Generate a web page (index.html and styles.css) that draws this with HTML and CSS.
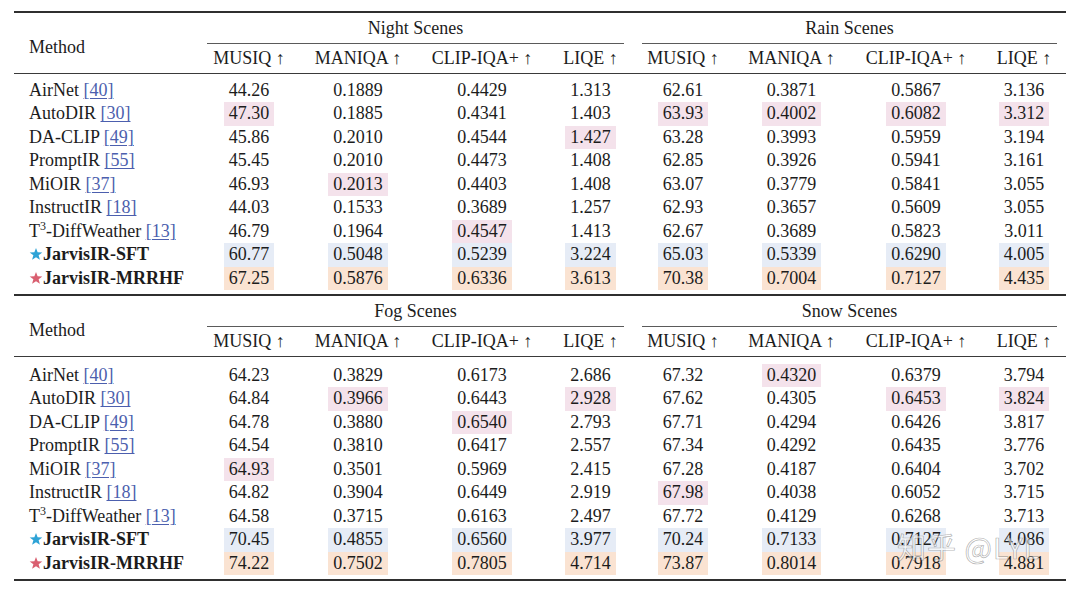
FILE: index.html
```html
<!DOCTYPE html>
<html lang="en">
<head>
<meta charset="utf-8">
<title>Results</title>
<link rel="stylesheet" href="styles.css">
</head>
<body>
<div class="page">
  <table class="tbl t1">
    <colgroup>
      <col class="c-m"><col class="c-a"><col class="c-b"><col class="c-c"><col class="c-d">
      <col class="c-e"><col class="c-f"><col class="c-g"><col class="c-h">
    </colgroup>
    <thead>
      <tr class="grp-row">
        <th class="method" rowspan="2">Method</th>
        <th colspan="4" class="grp"><div class="grp-in">Night Scenes</div></th>
        <th colspan="4" class="grp"><div class="grp-in">Rain Scenes</div></th>
      </tr>
      <tr class="hdr-row">
        <th>MUSIQ ↑</th><th>MANIQA ↑</th><th>CLIP-IQA+ ↑</th><th>LIQE ↑</th>
        <th>MUSIQ ↑</th><th>MANIQA ↑</th><th>CLIP-IQA+ ↑</th><th>LIQE ↑</th>
      </tr>
    </thead>
    <tbody>
      <tr class="first">
        <td class="name">AirNet <span class="cite">[40]</span></td>
        <td>44.26</td><td>0.1889</td><td>0.4429</td><td>1.313</td>
        <td>62.61</td><td>0.3871</td><td>0.5867</td><td>3.136</td>
      </tr>
      <tr>
        <td class="name">AutoDIR <span class="cite">[30]</span></td>
        <td><span class="hl pk">47.30</span></td><td>0.1885</td><td>0.4341</td><td>1.403</td>
        <td><span class="hl pk">63.93</span></td><td><span class="hl pk">0.4002</span></td><td><span class="hl pk">0.6082</span></td><td><span class="hl pk">3.312</span></td>
      </tr>
      <tr>
        <td class="name">DA-CLIP <span class="cite">[49]</span></td>
        <td>45.86</td><td>0.2010</td><td>0.4544</td><td><span class="hl pk">1.427</span></td>
        <td>63.28</td><td>0.3993</td><td>0.5959</td><td>3.194</td>
      </tr>
      <tr>
        <td class="name">PromptIR <span class="cite">[55]</span></td>
        <td>45.45</td><td>0.2010</td><td>0.4473</td><td>1.408</td>
        <td>62.85</td><td>0.3926</td><td>0.5941</td><td>3.161</td>
      </tr>
      <tr>
        <td class="name">MiOIR <span class="cite">[37]</span></td>
        <td>46.93</td><td><span class="hl pk">0.2013</span></td><td>0.4403</td><td>1.408</td>
        <td>63.07</td><td>0.3779</td><td>0.5841</td><td>3.055</td>
      </tr>
      <tr>
        <td class="name">InstructIR <span class="cite">[18]</span></td>
        <td>44.03</td><td>0.1533</td><td>0.3689</td><td>1.257</td>
        <td>62.93</td><td>0.3657</td><td>0.5609</td><td>3.055</td>
      </tr>
      <tr>
        <td class="name">T<sup>3</sup>-DiffWeather <span class="cite">[13]</span></td>
        <td>46.79</td><td>0.1964</td><td><span class="hl pk">0.4547</span></td><td>1.413</td>
        <td>62.67</td><td>0.3689</td><td>0.5823</td><td>3.011</td>
      </tr>
      <tr>
        <td class="name ours"><svg class="star s-blue" viewBox="0 0 24 24"><polygon points="12,1.5 14.8,9 22.8,9.3 16.5,14.2 18.7,22 12,17.5 5.3,22 7.5,14.2 1.2,9.3 9.2,9"/></svg>JarvisIR-SFT</td>
        <td><span class="hl bl">60.77</span></td><td><span class="hl bl">0.5048</span></td><td><span class="hl bl">0.5239</span></td><td><span class="hl bl">3.224</span></td>
        <td><span class="hl bl">65.03</span></td><td><span class="hl bl">0.5339</span></td><td><span class="hl bl">0.6290</span></td><td><span class="hl bl">4.005</span></td>
      </tr>
      <tr class="last">
        <td class="name ours"><svg class="star s-red" viewBox="0 0 24 24"><polygon points="12,1.5 14.8,9 22.8,9.3 16.5,14.2 18.7,22 12,17.5 5.3,22 7.5,14.2 1.2,9.3 9.2,9"/></svg>JarvisIR-MRRHF</td>
        <td><span class="hl or">67.25</span></td><td><span class="hl or">0.5876</span></td><td><span class="hl or">0.6336</span></td><td><span class="hl or">3.613</span></td>
        <td><span class="hl or">70.38</span></td><td><span class="hl or">0.7004</span></td><td><span class="hl or">0.7127</span></td><td><span class="hl or">4.435</span></td>
      </tr>
    </tbody>
  </table>

  <table class="tbl t2">
    <colgroup>
      <col class="c-m"><col class="c-a"><col class="c-b"><col class="c-c"><col class="c-d">
      <col class="c-e"><col class="c-f"><col class="c-g"><col class="c-h">
    </colgroup>
    <thead>
      <tr class="grp-row">
        <th class="method" rowspan="2">Method</th>
        <th colspan="4" class="grp"><div class="grp-in">Fog Scenes</div></th>
        <th colspan="4" class="grp"><div class="grp-in">Snow Scenes</div></th>
      </tr>
      <tr class="hdr-row">
        <th>MUSIQ ↑</th><th>MANIQA ↑</th><th>CLIP-IQA+ ↑</th><th>LIQE ↑</th>
        <th>MUSIQ ↑</th><th>MANIQA ↑</th><th>CLIP-IQA+ ↑</th><th>LIQE ↑</th>
      </tr>
    </thead>
    <tbody>
      <tr class="first">
        <td class="name">AirNet <span class="cite">[40]</span></td>
        <td>64.23</td><td>0.3829</td><td>0.6173</td><td>2.686</td>
        <td>67.32</td><td><span class="hl pk">0.4320</span></td><td>0.6379</td><td>3.794</td>
      </tr>
      <tr>
        <td class="name">AutoDIR <span class="cite">[30]</span></td>
        <td>64.84</td><td><span class="hl pk">0.3966</span></td><td>0.6443</td><td><span class="hl pk">2.928</span></td>
        <td>67.62</td><td>0.4305</td><td><span class="hl pk">0.6453</span></td><td><span class="hl pk">3.824</span></td>
      </tr>
      <tr>
        <td class="name">DA-CLIP <span class="cite">[49]</span></td>
        <td>64.78</td><td>0.3880</td><td><span class="hl pk">0.6540</span></td><td>2.793</td>
        <td>67.71</td><td>0.4294</td><td>0.6426</td><td>3.817</td>
      </tr>
      <tr>
        <td class="name">PromptIR <span class="cite">[55]</span></td>
        <td>64.54</td><td>0.3810</td><td>0.6417</td><td>2.557</td>
        <td>67.34</td><td>0.4292</td><td>0.6435</td><td>3.776</td>
      </tr>
      <tr>
        <td class="name">MiOIR <span class="cite">[37]</span></td>
        <td><span class="hl pk">64.93</span></td><td>0.3501</td><td>0.5969</td><td>2.415</td>
        <td>67.28</td><td>0.4187</td><td>0.6404</td><td>3.702</td>
      </tr>
      <tr>
        <td class="name">InstructIR <span class="cite">[18]</span></td>
        <td>64.82</td><td>0.3904</td><td>0.6449</td><td>2.919</td>
        <td><span class="hl pk">67.98</span></td><td>0.4038</td><td>0.6052</td><td>3.715</td>
      </tr>
      <tr>
        <td class="name">T<sup>3</sup>-DiffWeather <span class="cite">[13]</span></td>
        <td>64.58</td><td>0.3715</td><td>0.6163</td><td>2.497</td>
        <td>67.72</td><td>0.4129</td><td>0.6268</td><td>3.713</td>
      </tr>
      <tr>
        <td class="name ours"><svg class="star s-blue" viewBox="0 0 24 24"><polygon points="12,1.5 14.8,9 22.8,9.3 16.5,14.2 18.7,22 12,17.5 5.3,22 7.5,14.2 1.2,9.3 9.2,9"/></svg>JarvisIR-SFT</td>
        <td><span class="hl bl">70.45</span></td><td><span class="hl bl">0.4855</span></td><td><span class="hl bl">0.6560</span></td><td><span class="hl bl">3.977</span></td>
        <td><span class="hl bl">70.24</span></td><td><span class="hl bl">0.7133</span></td><td><span class="hl bl">0.7127</span></td><td><span class="hl bl">4.086</span></td>
      </tr>
      <tr class="last">
        <td class="name ours"><svg class="star s-red" viewBox="0 0 24 24"><polygon points="12,1.5 14.8,9 22.8,9.3 16.5,14.2 18.7,22 12,17.5 5.3,22 7.5,14.2 1.2,9.3 9.2,9"/></svg>JarvisIR-MRRHF</td>
        <td><span class="hl or">74.22</span></td><td><span class="hl or">0.7502</span></td><td><span class="hl or">0.7805</span></td><td><span class="hl or">4.714</span></td>
        <td><span class="hl or">73.87</span></td><td><span class="hl or">0.8014</span></td><td><span class="hl or">0.7918</span></td><td><span class="hl or">4.881</span></td>
      </tr>
    </tbody>
  </table>

  <div class="watermark">知乎 @LYL</div>
</div>
</body>
</html>
```

FILE: styles.css
```css
html, body {
  margin: 0;
  padding: 0;
  background: #ffffff;
}

body {
  font-family: "Liberation Serif", "Times New Roman", serif;
  font-size: 18px;
  color: #1c1c1c;
}

.page {
  position: relative;
  padding: 11px 0 0 14px;
}

.tbl {
  border-collapse: separate;
  border-spacing: 0;
  table-layout: fixed;
  width: 1052px;
}

.t1 {
  border-top: 2px solid #2f2f2f;
  border-bottom: 2px solid #2f2f2f;
}

.t2 {
  border-bottom: 2px solid #2f2f2f;
}

.c-m { width: 184px; }
.c-a { width: 102px; }
.c-b { width: 116px; }
.c-c { width: 132px; }
.c-d { width: 85px; }
.c-e { width: 100px; }
.c-f { width: 117px; }
.c-g { width: 132px; }
.c-h { width: 84px; }

th {
  font-weight: normal;
  padding: 0;
  white-space: nowrap;
}

th.method {
  text-align: left;
  padding: 8px 0 0 15px;
  vertical-align: middle;
  border-bottom: 1px solid #3a3a3a;
}

th.grp {
  vertical-align: top;
  padding: 0 9px;
}

.grp-in {
  height: 30px;
  line-height: 30px;
  border-bottom: 1px solid #5a5a5a;
  text-align: center;
}

.hdr-row th {
  height: 29px;
  line-height: 29px;
  text-align: center;
  border-bottom: 1px solid #3a3a3a;
}

td {
  height: 23.5px;
  line-height: 23.5px;
  padding: 0;
  text-align: center;
  white-space: nowrap;
}

td.name {
  text-align: left;
  padding-left: 15px;
}

tr.first td {
  padding-top: 4.5px;
}

.t2 tr.first td {
  padding-top: 6.5px;
}

tr.last td {
  padding-bottom: 4px;
}

.ours {
  font-weight: bold;
}

.cite {
  color: #4c5fae;
  text-decoration: underline;
  text-decoration-thickness: 1px;
  text-underline-offset: 2px;
}

sup {
  font-size: 12px;
  line-height: 0;
  vertical-align: 7px;
}

.hl {
  display: inline-block;
  padding: 0 5px;
  vertical-align: top;
}

.pk { background: #f4e2eb; }
.bl { background: #e6ecf6; }
.or { background: #fae3d2; }

.star {
  width: 14px;
  height: 14px;
  vertical-align: -1px;
  margin-right: 0;
}

.s-blue { fill: #2ea3d6; }
.s-red { fill: #d95f70; }

.watermark {
  position: absolute;
  left: 897px;
  top: 528px;
  font-family: "Noto Sans CJK SC", "Noto Sans", sans-serif;
  font-size: 29px;
  line-height: 36px;
  letter-spacing: 1px;
  color: rgba(255, 255, 255, 0.55);
  -webkit-text-stroke: 0.7px rgba(110, 110, 110, 0.55);
  white-space: nowrap;
}
```
